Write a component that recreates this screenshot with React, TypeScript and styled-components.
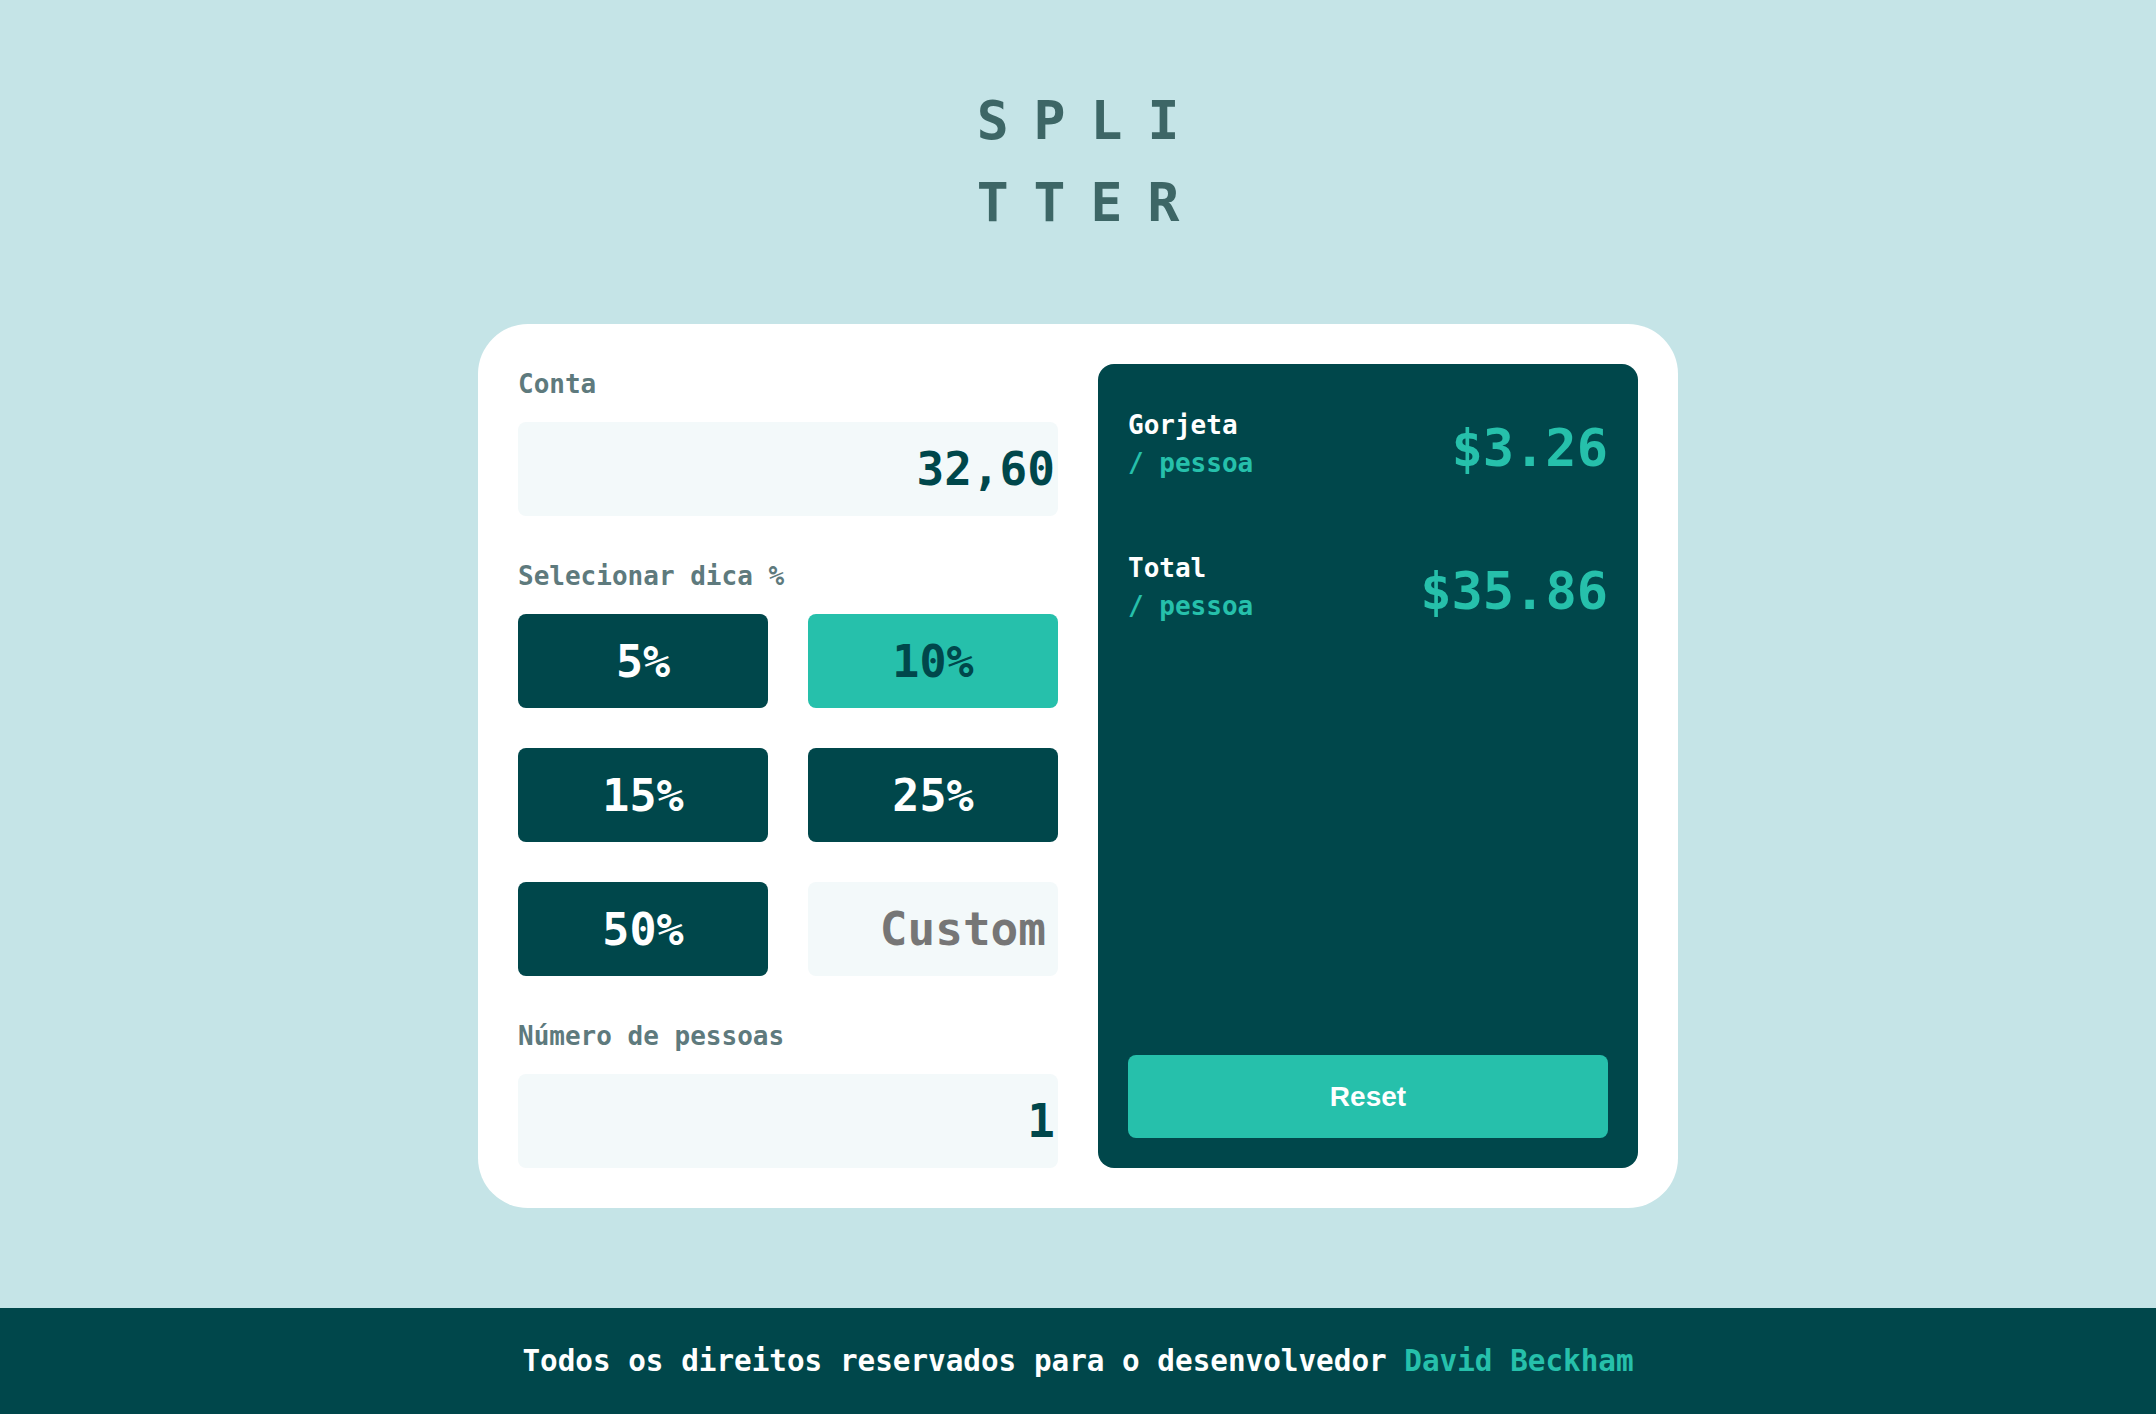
import React from "react";
import styled, { createGlobalStyle } from "styled-components";

const GlobalStyle = createGlobalStyle`
  * { box-sizing: border-box; }
  html, body { margin: 0; padding: 0; }
  body {
    background: #c5e4e7;
    font-family: "DejaVu Sans Mono", "Liberation Mono", monospace;
  }
`;

const Page = styled.div`
  min-height: 100vh;
  display: flex;
  flex-direction: column;
`;

const Main = styled.main`
  flex: 1;
  display: flex;
  flex-direction: column;
  align-items: center;
  padding-top: 80px;
`;

const Title = styled.h1`
  margin: 0 0 80px;
  font-size: 53px;
  line-height: 82px;
  font-weight: 700;
  color: #3d6666;
  text-align: center;
`;

const TitleLine = styled.span`
  display: block;
  letter-spacing: 25px;
  padding-left: 25px;
`;

const Card = styled.section`
  width: 1200px;
  background: #ffffff;
  border-radius: 50px;
  padding: 40px;
  display: grid;
  grid-template-columns: 1fr 1fr;
  gap: 40px;
`;

const InputColumn = styled.div`
  display: flex;
  flex-direction: column;
  gap: 42px;
  padding-top: 2px;
`;

const Field = styled.div`
  display: flex;
  flex-direction: column;
`;

const Label = styled.label`
  font-size: 26px;
  line-height: 36px;
  font-weight: 700;
  color: #5e7a7d;
  margin-bottom: 20px;
`;

const NumberInput = styled.input`
  width: 100%;
  height: 94px;
  border: none;
  outline: none;
  border-radius: 8px;
  background: #f3f9fa;
  padding: 0 3px 0 20px;
  text-align: right;
  font-family: "DejaVu Sans Mono", monospace;
  font-size: 46px;
  font-weight: 700;
  color: #00474b;
`;

const TipGrid = styled.div`
  display: grid;
  grid-template-columns: 1fr 1fr;
  grid-auto-rows: 94px;
  gap: 40px;
`;

const TipButton = styled.button<{ $active?: boolean }>`
  border: none;
  border-radius: 8px;
  background: ${(p) => (p.$active ? "#26c0ab" : "#00474b")};
  color: ${(p) => (p.$active ? "#00474b" : "#ffffff")};
  font-family: "DejaVu Sans Mono", monospace;
  font-size: 45px;
  font-weight: 700;
  cursor: pointer;
`;

const CustomInput = styled.input`
  width: 100%;
  height: 100%;
  border: none;
  outline: none;
  border-radius: 8px;
  background: #f3f9fa;
  padding: 0 12px 0 12px;
  text-align: right;
  font-family: "DejaVu Sans Mono", monospace;
  font-size: 46px;
  font-weight: 700;
  color: #00474b;
  &::placeholder {
    color: #767676;
    opacity: 1;
  }
`;

const ResultPanel = styled.div`
  background: #00474b;
  border-radius: 16px;
  padding: 42px 30px 30px;
  display: flex;
  flex-direction: column;
  justify-content: space-between;
`;

const Results = styled.div`
  display: flex;
  flex-direction: column;
  gap: 67px;
`;

const ResultRow = styled.div`
  display: flex;
  align-items: center;
  justify-content: space-between;
`;

const ResultLabel = styled.div`
  display: flex;
  flex-direction: column;
  font-size: 26px;
  line-height: 38px;
  font-weight: 700;
`;

const ResultName = styled.span`
  color: #ffffff;
`;

const ResultUnit = styled.span`
  color: #26c0ab;
`;

const Amount = styled.span`
  font-size: 52px;
  line-height: 1;
  font-weight: 700;
  color: #26c0ab;
  margin-top: 8px;
`;

const ResetButton = styled.button`
  width: 100%;
  height: 83px;
  border: none;
  border-radius: 8px;
  background: #26c0ab;
  color: #ffffff;
  font-family: "Liberation Sans", Arial, sans-serif;
  font-size: 28px;
  font-weight: 700;
  cursor: pointer;
`;

const Footer = styled.footer`
  height: 106px;
  background: #00474b;
  display: flex;
  align-items: center;
  justify-content: center;
  font-size: 29.3px;
  font-weight: 700;
  color: #ffffff;
`;

const Highlight = styled.span`
  color: #26c0ab;
`;

const tips = [
  { label: "5%", active: false },
  { label: "10%", active: true },
  { label: "15%", active: false },
  { label: "25%", active: false },
  { label: "50%", active: false },
];

export default function App() {
  return (
    <Page>
      <GlobalStyle />
      <Main>
        <Title>
          <TitleLine>SPLI</TitleLine>
          <TitleLine>TTER</TitleLine>
        </Title>
        <Card>
          <InputColumn>
            <Field>
              <Label htmlFor="bill">Conta</Label>
              <NumberInput id="bill" defaultValue="32,60" />
            </Field>
            <Field>
              <Label>Selecionar dica %</Label>
              <TipGrid>
                {tips.map((t) => (
                  <TipButton key={t.label} $active={t.active}>
                    {t.label}
                  </TipButton>
                ))}
                <CustomInput placeholder="Custom" />
              </TipGrid>
            </Field>
            <Field>
              <Label htmlFor="people">Número de pessoas</Label>
              <NumberInput id="people" defaultValue="1" />
            </Field>
          </InputColumn>
          <ResultPanel>
            <Results>
              <ResultRow>
                <ResultLabel>
                  <ResultName>Gorjeta</ResultName>
                  <ResultUnit>/ pessoa</ResultUnit>
                </ResultLabel>
                <Amount>$3.26</Amount>
              </ResultRow>
              <ResultRow>
                <ResultLabel>
                  <ResultName>Total</ResultName>
                  <ResultUnit>/ pessoa</ResultUnit>
                </ResultLabel>
                <Amount>$35.86</Amount>
              </ResultRow>
            </Results>
            <ResetButton>Reset</ResetButton>
          </ResultPanel>
        </Card>
      </Main>
      <Footer>
        <span>
          Todos os direitos reservados para o desenvolvedor{" "}
          <Highlight>David Beckham</Highlight>
        </span>
      </Footer>
    </Page>
  );
}
